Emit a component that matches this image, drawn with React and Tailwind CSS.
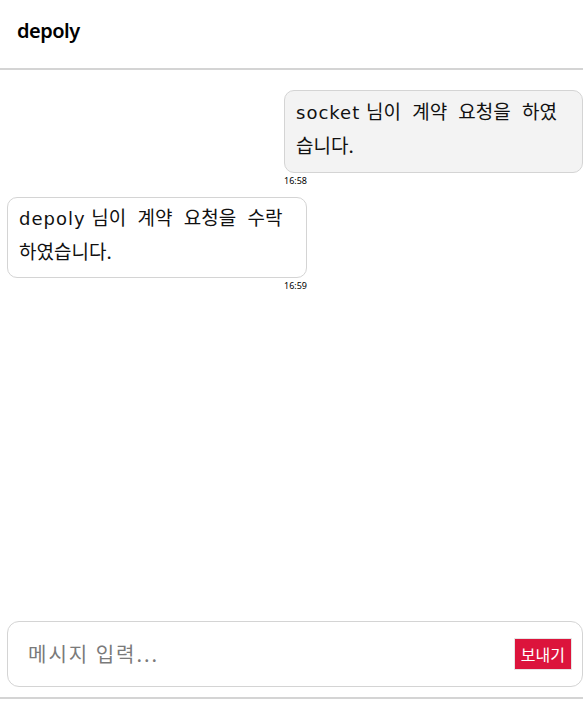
export default function App() {
  const font = { fontFamily: '"Noto Sans", "Noto Sans CJK KR", sans-serif' };
  const bubbleFont = { fontFamily: '"DejaVu Sans", "Noto Sans CJK KR", sans-serif' };
  const ko = { fontFamily: '"Noto Sans CJK KR", sans-serif', wordSpacing: "7px" };
  return (
    <div className="h-[710px] w-[583px] flex flex-col bg-white text-black overflow-hidden" style={font}>
      <header className="h-[70px] shrink-0 flex items-center px-[17px] border-b-2 border-[#d4d4d4]">
        <h1 className="text-[20px] font-semibold tracking-tight -mt-[6px]">depoly</h1>
      </header>

      <main className="flex-1 flex flex-col pt-[20px] pl-[7px]">
        <div className="flex flex-col items-start self-end w-[299px]">
          <div
            className="w-full rounded-[10px] border border-[#d4d4d4] bg-[#f3f3f3] px-[11px] pt-[4px] pb-[9px] text-[18px] leading-[32px] text-[#111]"
            style={bubbleFont}
          >
            <span className="tracking-[1px]">socket</span>{" "}
            <span className="text-[19px] leading-[32px]" style={ko}>님이 계약 요청을 하였습니다.</span>
          </div>
          <span className="text-[9px] leading-[14px] mt-[1px]">16:58</span>
        </div>

        <div className="flex flex-col items-end w-[300px] mt-[9px]">
          <div
            className="w-full rounded-[10px] border border-[#d4d4d4] bg-white px-[11px] pt-[3px] pb-[8px] text-[18px] leading-[32px] text-[#111]"
            style={bubbleFont}
          >
            <span className="tracking-[1px]">depoly</span>{" "}
            <span className="text-[19px] leading-[32px]" style={ko}>님이 계약 요청을 수락하였습니다.</span>
          </div>
          <span className="text-[9px] leading-[14px] mt-[1px]">16:59</span>
        </div>
      </main>

      <div className="pl-[7px] pb-[10px]">
        <div className="h-[66px] rounded-[12px] border border-[#d4d4d4] flex items-center pl-[20px] pr-[10px]">
          <input
            className="flex-1 outline-none text-[20px] tracking-[2px] placeholder:text-[#7a7a7a]"
            style={{ fontFamily: '"Noto Sans CJK KR", sans-serif' }}
            placeholder="메시지 입력..."
          />
          <button
            className="bg-[#dc143c] text-white text-[16px] px-[6px] h-[32px] border border-[#e5e5e5]"
            style={{ fontFamily: '"Noto Sans CJK KR", sans-serif' }}
          >
            보내기
          </button>
        </div>
      </div>
      <div className="h-[2px] bg-[#d4d4d4] mb-[11px]" />
    </div>
  );
}
